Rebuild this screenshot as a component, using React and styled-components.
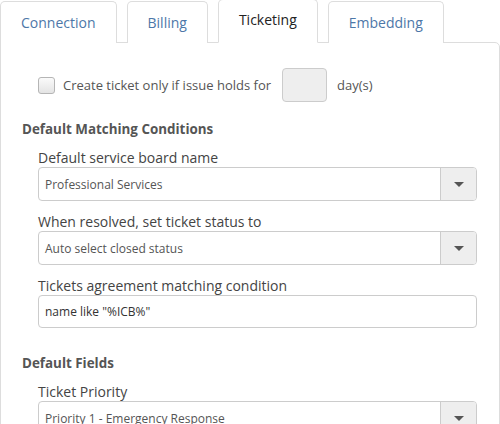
import styled, { createGlobalStyle } from "styled-components";

const Global = createGlobalStyle`
  html, body {
    margin: 0;
    background: #fff;
    font-family: "Open Sans", "Liberation Sans", sans-serif;
    overflow: hidden;
  }
`

const Page = styled.div`
  width: 500px;
`

const Tabs = styled.div`
  display: flex;
  align-items: flex-end;
  gap: 10px;
  height: 43px;
`

const Tab = styled.div`
  position: relative;
  z-index: ${p => p.$active ? 2 : 1};
  box-sizing: border-box;
  height: ${p => p.$active ? 44 : 42}px;
  padding: 0 20px ${p => p.$active ? 3 : 1}px;
  display: flex;
  align-items: center;
  border: 1px solid #ddd;
  border-bottom: ${p => p.$active ? '1px solid #fff' : 'none'};
  border-radius: 5px 5px 0 0;
  background: #fff;
  font-size: 14px;
  color: ${p => p.$active ? '#222' : '#4d77a8'};
  cursor: pointer;
`

const Panel = styled.div`
  box-sizing: border-box;
  width: 500px;
  margin-top: -1px;
  border: 1px solid #ddd;
  border-top-right-radius: 5px;
  padding: 25px 22px 20px 21px;
`

const CheckRow = styled.div`
  display: flex;
  align-items: center;
  padding-left: 16px;
  font-size: 13px;
  color: #555;
`

const Box = styled.span`
  box-sizing: border-box;
  width: 17px;
  height: 17px;
  margin-right: 8px;
  border: 1px solid #b5b5b5;
  border-radius: 3px;
  background: linear-gradient(#fafafa, #e4e4e4);
`

const Days = styled.span`
  box-sizing: border-box;
  width: 45px;
  height: 34px;
  margin: 0 10px 0 11px;
  border: 1px solid #ccc;
  border-radius: 4px;
  background: #eee;
`

const Heading = styled.div`
  margin-top: ${p => p.$top}px;
  font-size: 13.4px;
  font-weight: bold;
  line-height: 20px;
  color: #555;
`

const Fields = styled.div`
  display: flex;
  flex-direction: column;
  gap: 12px;
  margin: 10px 0 0 16px;
`

const Label = styled.div`
  font-size: 14px;
  line-height: 18px;
  color: #444;
`

const Control = styled.div`
  box-sizing: border-box;
  display: flex;
  height: ${p => p.$h || 34}px;
  border: 1px solid #ccc;
  border-radius: 4px;
  background: #fff;
  overflow: hidden;
`

const Value = styled.div`
  flex: 1;
  display: flex;
  align-items: center;
  padding-left: 6px;
  font-size: 12px;
  color: ${p => p.$dark ? '#333' : '#555'};
`

const Caret = styled.div`
  width: 35px;
  display: flex;
  align-items: center;
  justify-content: center;
  border-left: 1px solid #ccc;
  background: #eee;
  &::after {
    content: "";
    border-left: 5px solid transparent;
    border-right: 5px solid transparent;
    border-top: 5px solid #555;
  }
`

function Field({ label, value, select, h }) {
  return (
    <div>
      <Label>{label}</Label>
      <Control $h={h}>
        <Value $dark={!select}>{value}</Value>
        {select && <Caret />}
      </Control>
    </div>
  )
}

export default function App() {
  const tabs = ['Connection', 'Billing', 'Ticketing', 'Embedding']
  return (
    <>
      <Global />
      <Page>
        <Tabs>
          {tabs.map(t => <Tab key={t} $active={t === 'Ticketing'}>{t}</Tab>)}
        </Tabs>
        <Panel>
          <CheckRow>
            <Box />
            Create ticket only if issue holds for
            <Days />
            day(s)
          </CheckRow>
          <Heading $top={17}>Default Matching Conditions</Heading>
          <Fields>
            <Field label="Default service board name" value="Professional Services" select />
            <Field label="When resolved, set ticket status to" value="Auto select closed status" select />
            <Field label="Tickets agreement matching condition" value={'name like "%ICB%"'} h={33} />
          </Fields>
          <Heading $top={25}>Default Fields</Heading>
          <Fields>
            <Field label="Ticket Priority" value="Priority 1 - Emergency Response" select />
          </Fields>
        </Panel>
      </Page>
    </>
  )
}
